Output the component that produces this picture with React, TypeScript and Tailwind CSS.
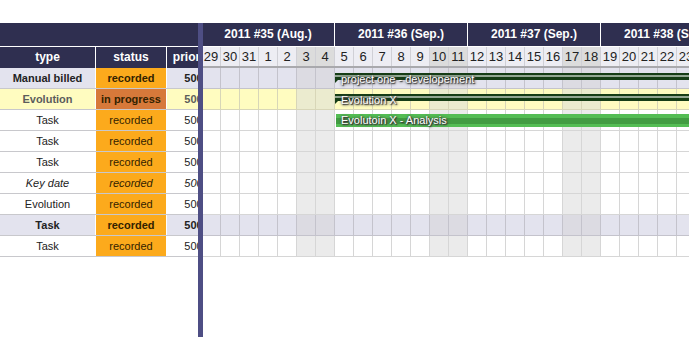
const rows = [
  { type: "Manual billed", status: "recorded", tone: "lav", weight: "bold" },
  { type: "Evolution", status: "in progress", tone: "yel", weight: "bold" },
  { type: "Task", status: "recorded", tone: "white", weight: "normal" },
  { type: "Task", status: "recorded", tone: "white", weight: "normal" },
  { type: "Task", status: "recorded", tone: "white", weight: "normal" },
  { type: "Key date", status: "recorded", tone: "white", weight: "italic" },
  { type: "Evolution", status: "recorded", tone: "white", weight: "normal" },
  { type: "Task", status: "recorded", tone: "lav", weight: "bold" },
  { type: "Task", status: "recorded", tone: "white", weight: "normal" },
];

const days = [29, 30, 31, 1, 2, 3, 4, 5, 6, 7, 8, 9, 10, 11, 12, 13, 14, 15, 16, 17, 18, 19, 20, 21, 22, 23];
const weekend = (i: number) => i % 7 === 5 || i % 7 === 6;
const weeks = ["2011 #35 (Aug.)", "2011 #36 (Sep.)", "2011 #37 (Sep.)", "2011 #38 (Sep.)"];

function cellBg(tone: string, we: boolean) {
  if (tone === "lav") return we ? "bg-[#dcdbe2] border-[#c4c3cc]" : "bg-[#e3e3ee] border-[#c4c3cc]";
  if (tone === "yel") return we ? "bg-[#ebebcf] border-[#d8d6b8]" : "bg-[#fffcc0] border-[#d8d6b8]";
  return we ? "bg-[#ebebeb] border-[#d6d6d6]" : "bg-white border-[#d6d6d6]";
}

function textStyle(weight: string, tone: string) {
  const w = weight === "bold" ? "font-bold" : weight === "italic" ? "italic" : "";
  const c = tone === "yel" ? "text-[#5c5c5c]" : "text-[#222]";
  return `${w} ${c}`;
}

function SummaryBar({ label }: { label: string }) {
  return (
    <>
      <div className="absolute left-[133px] right-0 top-[5px] h-[7px] bg-[#163d16] flex flex-col">
        <div className="mt-[2px] h-[2px] bg-[#93a793]" />
      </div>
      <div className="absolute left-[133px] top-[11px] w-0 h-0 border-t-[4px] border-t-[#163d16] border-r-[4px] border-r-transparent" />
      <span className="absolute left-[139px] top-[5px] leading-[13px] text-[11px] text-white whitespace-nowrap [text-shadow:1px_1px_1px_#333,0_0_3px_#444,1px_1px_3px_#555]">
        {label}
      </span>
    </>
  );
}

function TaskBar({ label }: { label: string }) {
  return (
    <>
      <div className="absolute left-[134px] right-0 top-[4px] h-[13px] bg-[#54bd54] flex flex-col">
        <div className="mt-[4px] h-[6px] bg-[#429c42]" />
      </div>
      <span className="absolute left-[139px] top-[4px] leading-[13px] text-[11px] text-white whitespace-nowrap [text-shadow:1px_1px_1px_#333,0_0_3px_#444,1px_1px_3px_#555]">
        {label}
      </span>
    </>
  );
}

export default function App() {
  return (
    <div className="w-[689px] h-[337px] overflow-hidden bg-white pt-[23px] font-['Liberation_Sans',Arial,sans-serif]">
      <div className="flex h-full">
        {/* left grid */}
        <div className="w-[198px] shrink-0 overflow-hidden">
          <div className="w-[220px]">
            <div className="h-[24px] bg-[#2f2f50] border-b border-white" />
            <div className="flex h-[21px] bg-[#2f2f50] text-white text-[12px] font-bold leading-[21px]">
              <div className="w-[96px] text-center border-r border-white">type</div>
              <div className="w-[71px] text-center border-r border-white">status</div>
              <div className="w-[53px] text-center">priority</div>
            </div>
            {rows.map((r, i) => (
              <div
                key={i}
                className={`flex h-[21px] border-b border-[#c8c8cc] text-[11px] leading-[20px] ${
                  r.tone === "lav" ? "bg-[#e3e3ee]" : r.tone === "yel" ? "bg-[#fffcc0]" : "bg-white"
                } ${textStyle(r.weight, r.tone)}`}
              >
                <div className="w-[96px] text-center border-r border-white">{r.type}</div>
                <div
                  className={`w-[71px] text-center border-r border-white text-[#332200] ${
                    r.status === "in progress" ? "bg-[#d7793a]" : "bg-[#fcaa1c]"
                  } ${r.tone === "yel" ? "text-[#2a1a00]" : ""}`}
                >
                  {r.status}
                </div>
                <div className="w-[53px] text-center">500</div>
              </div>
            ))}
          </div>
        </div>

        {/* splitter */}
        <div className="w-[5px] shrink-0 bg-[#4e4e84]" />

        {/* gantt chart */}
        <div className="flex-1 overflow-hidden">
          <div className="ml-[-1px] w-[494px]">
            <div className="flex h-[24px] bg-[#2f2f50] border-b border-white">
              {weeks.map((w) => (
                <div
                  key={w}
                  className="w-[133px] shrink-0 border-r border-white text-white text-[12px] font-bold leading-[23px] text-center whitespace-nowrap"
                >
                  {w}
                </div>
              ))}
            </div>
            <div className="flex h-[21px] border-b-2 border-[#a9a9ad]">
              {days.map((d, i) => (
                <div
                  key={i}
                  className={`w-[19px] shrink-0 border-r border-[#d0d0d6] text-[13px] leading-[19px] text-center text-[#222] ${
                    weekend(i) ? "bg-[#dcdcdc]" : "bg-[#ededf3]"
                  }`}
                >
                  {d}
                </div>
              ))}
            </div>
            {rows.map((r, ri) => (
              <div key={ri} className="relative flex h-[21px]">
                {days.map((_, i) => (
                  <div
                    key={i}
                    className={`w-[19px] h-[21px] shrink-0 border-r border-b ${cellBg(r.tone, weekend(i))}`}
                  />
                ))}
                {ri === 0 && <SummaryBar label="project one - developement" />}
                {ri === 1 && <SummaryBar label="Evolution X" />}
                {ri === 2 && <TaskBar label="Evolutoin X - Analysis" />}
              </div>
            ))}
          </div>
        </div>
      </div>
    </div>
  );
}
